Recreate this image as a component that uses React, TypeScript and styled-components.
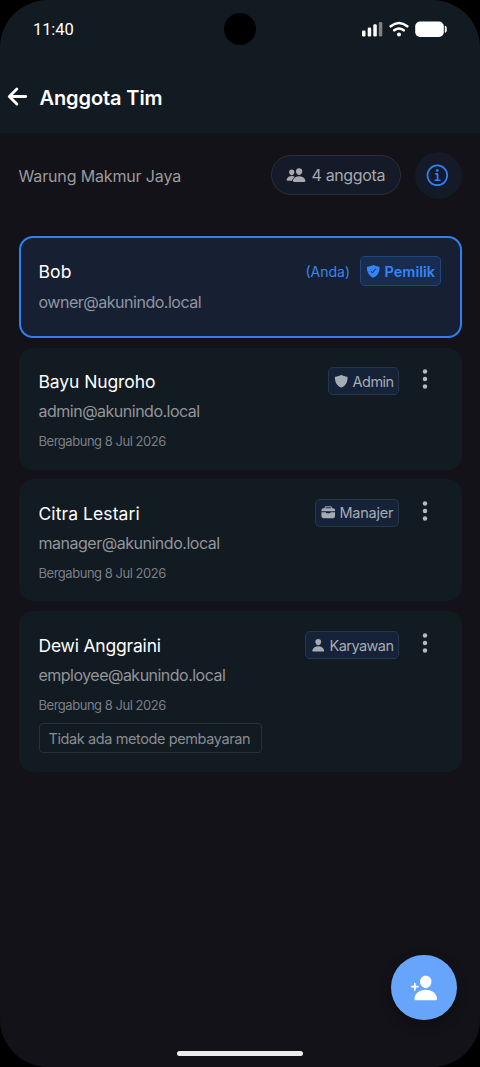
import React from "react";
import styled, { createGlobalStyle } from "styled-components";
import {
  IoArrowBack,
  IoBriefcase,
  IoEllipsisVertical,
  IoInformationCircleOutline,
  IoPeople,
  IoPerson,
  IoPersonAdd,
  IoShield,
  IoShieldCheckmark,
} from "react-icons/io5";

const Global = createGlobalStyle`
  * { box-sizing: border-box; }
  body { margin: 0; background: #000; font-family: "Inter", "Liberation Sans", sans-serif; }
  button { font: inherit; border: 0; padding: 0; background: none; color: inherit; }
  svg { display: block; flex: none; }
`;

const Screen = styled.div`
  position: relative;
  width: 480px;
  height: 1067px;
  overflow: hidden;
  border-radius: 48px;
  background: #131218;
  white-space: nowrap;
`;

const Header = styled.header`
  height: 133px;
  background: #121a22;
`;

const StatusBar = styled.div`
  height: 60px;
  padding: 0 32px 0 33px;
  display: flex;
  align-items: center;
  justify-content: space-between;
  color: #fff;
`;

const Clock = styled.span`
  font: 400 16.5px/20px Roboto, sans-serif;
  letter-spacing: -0.1px;
`;

const Camera = styled.div`
  position: absolute;
  top: 13px;
  left: 224px;
  width: 32px;
  height: 32px;
  border-radius: 50%;
  background: #000;
`;

const TitleRow = styled.div`
  height: 73px;
  padding-left: 4px;
  display: flex;
  align-items: center;
  color: #fff;
`;

const BackButton = styled.button`
  width: 35.5px;
  font-size: 27px;
  path { stroke-width: 54px; }
`;

const Title = styled.h1<{ $track: number }>`
  margin: 3px 0 0;
  font-size: 20px;
  line-height: 26px;
  font-weight: 600;
  letter-spacing: ${(p) => p.$track}px;
`;

const Main = styled.main`
  padding: 19px 18.5px 0;
`;

const Summary = styled.section`
  height: 47px;
  display: flex;
  align-items: center;
`;

const Business = styled.div<{ $track: number }>`
  flex: 1;
  font-size: 16px;
  line-height: 22px;
  color: #9b9b9f;
  letter-spacing: ${(p) => p.$track}px;
`;

const CountPill = styled.div<{ $track: number }>`
  width: 130px;
  height: 40px;
  margin: 0 14px 1px 0;
  padding-left: 14px;
  display: flex;
  align-items: center;
  gap: 6px;
  border: 1px solid #2a2e37;
  border-radius: 20px;
  background: #141a28;
  color: #a7a9ae;
  font-size: 16px;
  letter-spacing: ${(p) => p.$track}px;
`;

const InfoButton = styled.button`
  width: 47px;
  height: 47px;
  display: grid;
  place-items: center;
  border-radius: 50%;
  background: #141a28;
  color: #3080f5;
  font-size: 27.5px;
`;

const List = styled.div`
  margin-top: 37px;
  display: flex;
  flex-direction: column;
  gap: 9.5px;
`;

const Card = styled.article<{ $self?: boolean; $height: number; $top: number }>`
  height: ${(p) => p.$height}px;
  padding: ${(p) => p.$top}px ${(p) => (p.$self ? 18 : 20)}px 0;
  border: ${(p) => (p.$self ? "2px solid #2f80f0" : "0")};
  border-radius: 14px;
  background: ${(p) => (p.$self ? "#172033" : "#121a22")};
`;

const CardTop = styled.div`
  height: 29px;
  display: flex;
  align-items: center;
`;

const Name = styled.h2<{ $track: number }>`
  margin: 0;
  flex: 1;
  font-size: 17.5px;
  line-height: 24px;
  font-weight: 430;
  color: #fff;
  letter-spacing: ${(p) => p.$track}px;
`;

const You = styled.span`
  margin-right: 10px;
  font-size: 14px;
  color: #3a86ee;
`;

const Badge = styled.span<{ $owner?: boolean; $width: number; $track: number }>`
  width: ${(p) => p.$width}px;
  height: ${(p) => (p.$owner ? 30 : 28)}px;
  margin-bottom: ${(p) => (p.$owner ? 1 : 2)}px;
  margin-right: ${(p) => (p.$owner ? 0.5 : 0)}px;
  padding-left: 5px;
  display: flex;
  align-items: center;
  gap: 4px;
  border: 1px solid ${(p) => (p.$owner ? "#20457f" : "#27374a")};
  border-radius: 5px;
  background: ${(p) => (p.$owner ? "#182c4d" : "#152238")};
  color: ${(p) => (p.$owner ? "#3385fb" : "#a5abb3")};
  font-size: 14.5px;
  font-weight: ${(p) => (p.$owner ? 600 : 380)};
  letter-spacing: ${(p) => p.$track}px;
`;

const MenuButton = styled.button`
  width: 24px;
  margin: -6px 4.5px 0 14px;
  font-size: 24px;
  color: #b6b8bb;
`;

const Email = styled.div<{ $track: number; $self?: boolean }>`
  margin-top: ${(p) => (p.$self ? 5 : 3.5)}px;
  font-size: 16px;
  line-height: 22px;
  font-weight: 380;
  color: ${(p) => (p.$self ? "#8e96a3" : "#929599")};
  letter-spacing: ${(p) => p.$track}px;
`;

const Joined = styled.div<{ $track: number }>`
  margin-top: 9px;
  font-size: 13px;
  line-height: 20px;
  color: #7b7f85;
  letter-spacing: ${(p) => p.$track}px;
`;

const NoPayment = styled.div<{ $track: number }>`
  width: 223px;
  height: 30px;
  margin-top: 8px;
  padding-left: 9px;
  display: flex;
  align-items: center;
  border: 1px solid #293038;
  border-radius: 4px;
  font-size: 14.5px;
  color: #898d92;
  letter-spacing: ${(p) => p.$track}px;
`;

const Fab = styled.button`
  position: absolute;
  left: 391.3px;
  top: 954.8px;
  width: 65.6px;
  height: 65.6px;
  display: grid;
  place-items: center;
  border-radius: 50%;
  background: #67a5fd;
  color: #fff;
  font-size: 28px;
  box-shadow: 0 5px 12px rgba(0, 0, 0, 0.35);
`;

const HomeIndicator = styled.div`
  position: absolute;
  left: 177px;
  top: 1051px;
  width: 126px;
  height: 5px;
  border-radius: 3px;
  background: #ececec;
`;

const StatusIcons = () => (
  <svg width="86" height="18" viewBox="0 0 86 18" fill="#fff">
    <rect x="0" y="9.5" width="3.5" height="6" rx="1.2" />
    <rect x="5.7" y="6.5" width="3.5" height="9" rx="1.2" />
    <rect x="11.3" y="3.3" width="3.5" height="12.2" rx="1.2" />
    <rect x="16.8" y="1" width="3.5" height="14.5" rx="1.2" opacity=".45" />
    <g fill="none" stroke="#fff" strokeWidth="2.6" strokeLinecap="round">
      <path d="M28.7 5.3Q37 -1.3 45.3 5.3" />
      <path d="M32.2 9.3Q37 5.7 41.8 9.3" />
    </g>
    <circle cx="37" cy="13.5" r="2" />
    <rect x="53.2" y=".5" width="28.6" height="15.5" rx="4.8" />
    <path d="M82.8 4.8C84.3 5.1 84.8 6 84.8 8.3S84.3 11.5 82.8 11.8Z" />
  </svg>
);

type Member = {
  name: string;
  nameTrack: number;
  email: string;
  emailTrack: number;
  role: string;
  roleTrack: number;
  badgeWidth: number;
  Icon: React.ComponentType<{ size?: number }>;
  height: number;
  top: number;
  joined?: string;
  owner?: boolean;
  noPayment?: boolean;
};

const members: Member[] = [
  { name: "Bob", nameTrack: 0.1, email: "owner@akunindo.local", emailTrack: -0.48, role: "Pemilik", roleTrack: 0, badgeWidth: 81, Icon: IoShieldCheckmark, height: 102, top: 19, owner: true },
  { name: "Bayu Nugroho", nameTrack: -0.1, email: "admin@akunindo.local", emailTrack: -0.5, role: "Admin", roleTrack: -0.5, badgeWidth: 71, Icon: IoShield, height: 122, top: 20, joined: "Bergabung 8 Jul 2026" },
  { name: "Citra Lestari", nameTrack: 0.08, email: "manager@akunindo.local", emailTrack: -0.48, role: "Manajer", roleTrack: -0.25, badgeWidth: 84, Icon: IoBriefcase, height: 122, top: 20, joined: "Bergabung 8 Jul 2026" },
  { name: "Dewi Anggraini", nameTrack: -0.2, email: "employee@akunindo.local", emailTrack: -0.52, role: "Karyawan", roleTrack: -0.55, badgeWidth: 94, Icon: IoPerson, height: 161, top: 21, joined: "Bergabung 8 Jul 2026", noPayment: true },
];

export default function App() {
  return (
    <Screen>
      <Global />
      <Header>
        <StatusBar>
          <Clock>11:40</Clock>
          <StatusIcons />
        </StatusBar>
        <Camera />
        <TitleRow>
          <BackButton aria-label="Kembali">
            <IoArrowBack />
          </BackButton>
          <Title $track={-0.1}>Anggota Tim</Title>
        </TitleRow>
      </Header>
      <Main>
        <Summary>
          <Business $track={-0.15}>Warung Makmur Jaya</Business>
          <CountPill $track={-0.35}>
            <IoPeople size={20} />
            4 anggota
          </CountPill>
          <InfoButton aria-label="Info">
            <IoInformationCircleOutline />
          </InfoButton>
        </Summary>
        <List>
          {members.map((m) => (
            <Card key={m.email} $self={m.owner} $height={m.height} $top={m.top}>
              <CardTop>
                <Name $track={m.nameTrack}>{m.name}</Name>
                {m.owner && <You>(Anda)</You>}
                <Badge $owner={m.owner} $width={m.badgeWidth} $track={m.roleTrack}>
                  <m.Icon size={14.5} />
                  {m.role}
                </Badge>
                {!m.owner && (
                  <MenuButton aria-label="Menu">
                    <IoEllipsisVertical />
                  </MenuButton>
                )}
              </CardTop>
              <Email $self={m.owner} $track={m.emailTrack}>{m.email}</Email>
              {m.joined && <Joined $track={-0.47}>{m.joined}</Joined>}
              {m.noPayment && <NoPayment $track={-0.4}>Tidak ada metode pembayaran</NoPayment>}
            </Card>
          ))}
        </List>
      </Main>
      <Fab aria-label="Tambah anggota">
        <IoPersonAdd />
      </Fab>
      <HomeIndicator />
    </Screen>
  );
}
